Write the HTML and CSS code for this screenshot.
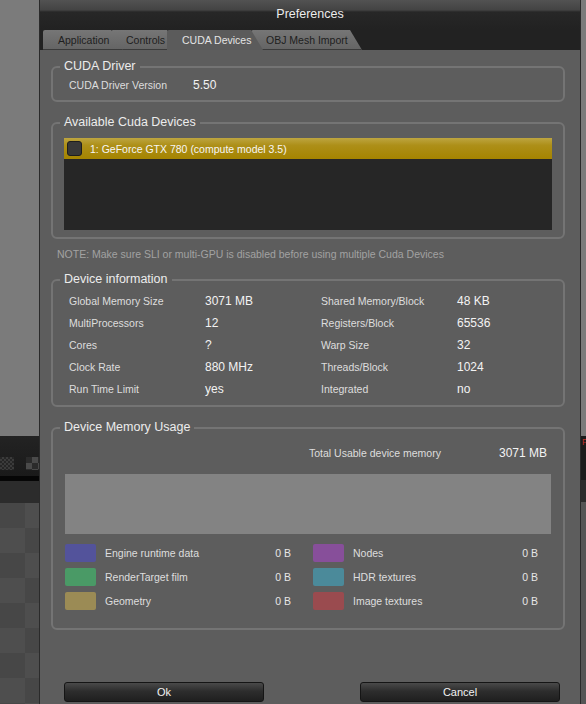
FILE: index.html
```html
<!DOCTYPE html>
<html lang="en">
<head>
<meta charset="utf-8">
<title>Preferences</title>
<link rel="stylesheet" href="styles.css">
</head>
<body>
<div class="screen">
  <div class="side side-left">
    <div class="side-top"></div>
    <div class="side-toolbar"><span class="chk chk-a"></span><span class="chk chk-b"></span></div>
    <div class="side-line"></div>
    <div class="side-bar"></div>
    <div class="side-checker"></div>
  </div>

  <div class="dialog">
    <div class="titlebar">Preferences</div>
    <div class="tabbar">
      <div class="tab tab-app">Application</div>
      <div class="tab tab-ctrl">Controls</div>
      <div class="tab tab-active">CUDA Devices</div>
      <div class="tab tab-obj">OBJ Mesh Import</div>
    </div>

    <div class="content">
      <fieldset class="group g-driver">
        <legend>CUDA Driver</legend>
        <div class="drv-row"><span class="lbl">CUDA Driver Version</span><span class="val">5.50</span></div>
      </fieldset>

      <fieldset class="group g-devices">
        <legend>Available Cuda Devices</legend>
        <div class="list-wrap">
          <div class="list">
            <div class="list-item"><span class="check"></span><span>1: GeForce GTX 780 (compute model 3.5)</span></div>
          </div>
        </div>
      </fieldset>

      <div class="note">NOTE: Make sure SLI or multi-GPU is disabled before using multiple Cuda Devices</div>

      <fieldset class="group g-info">
        <legend>Device information</legend>
        <div class="info-grid">
          <span class="lbl">Global Memory Size</span><span class="val">3071 MB</span>
          <span class="lbl">Shared Memory/Block</span><span class="val">48 KB</span>
          <span class="lbl">MultiProcessors</span><span class="val">12</span>
          <span class="lbl">Registers/Block</span><span class="val">65536</span>
          <span class="lbl">Cores</span><span class="val">?</span>
          <span class="lbl">Warp Size</span><span class="val">32</span>
          <span class="lbl">Clock Rate</span><span class="val">880 MHz</span>
          <span class="lbl">Threads/Block</span><span class="val">1024</span>
          <span class="lbl">Run Time Limit</span><span class="val">yes</span>
          <span class="lbl">Integrated</span><span class="val">no</span>
        </div>
      </fieldset>

      <fieldset class="group g-mem">
        <legend>Device Memory Usage</legend>
        <div class="mem-wrap">
          <div class="total"><span class="lbl">Total Usable device memory</span><span class="val">3071 MB</span></div>
          <div class="mem-bar"></div>
          <div class="mem-legend">
            <div class="mem-item"><span class="sw sw-engine"></span><span class="lbl">Engine runtime data</span><span class="num">0 B</span></div>
            <div class="mem-item"><span class="sw sw-nodes"></span><span class="lbl">Nodes</span><span class="num">0 B</span></div>
            <div class="mem-item"><span class="sw sw-film"></span><span class="lbl">RenderTarget film</span><span class="num">0 B</span></div>
            <div class="mem-item"><span class="sw sw-hdr"></span><span class="lbl">HDR textures</span><span class="num">0 B</span></div>
            <div class="mem-item"><span class="sw sw-geo"></span><span class="lbl">Geometry</span><span class="num">0 B</span></div>
            <div class="mem-item"><span class="sw sw-img"></span><span class="lbl">Image textures</span><span class="num">0 B</span></div>
          </div>
        </div>
      </fieldset>

      <div class="footer">
        <button class="btn">Ok</button>
        <button class="btn">Cancel</button>
      </div>
    </div>
  </div>

  <div class="side side-right">
    <div class="side-top"></div>
    <div class="side-toolbar-r"><span class="red-p">P</span></div>
    <div class="side-bar"></div>
    <div class="side-plain"></div>
  </div>
</div>
</body>
</html>
```

FILE: styles.css
```css
* { box-sizing: border-box; }

body {
  margin: 0;
  background: #7b7b7b;
  font-family: "Liberation Sans", Arial, sans-serif;
}

.screen {
  display: flex;
  width: 586px;
  height: 704px;
  overflow: hidden;
}

/* ---------- background strips ---------- */
.side {
  display: flex;
  flex-direction: column;
  flex: none;
  overflow: hidden;
}
.side-left { width: 39px; }
.side-right { width: 5px; }

.side-top { height: 436px; flex: none; background: #7b7b7b; }

.side-toolbar {
  height: 40px;
  flex: none;
  background: linear-gradient(#232323, #1a1a1a);
  display: flex;
  gap: 12px;
  padding-top: 21px;
}
.chk { display: block; width: 14px; height: 13px; }
.chk-a {
  background: repeating-conic-gradient(#3b3b3b 0 25%, #262626 0 50%) 0 0 / 4px 4px;
}
.chk-b {
  width: 13px;
  background: repeating-conic-gradient(#4a4a4a 0 25%, #2b2b2b 0 50%) 0 0 / 12px 12px;
}
.side-line { height: 5px; flex: none; background: #060606; }
.side-bar { height: 22px; flex: none; background: #2c2c2c; }
.side-checker {
  flex: 1;
  background: repeating-conic-gradient(#4e4e4e 0 25%, #474747 0 50%) 0 0 / 50px 50px;
}

.side-toolbar-r {
  height: 44px;
  flex: none;
  background: #1b1b1b;
  padding-top: 1px;
}
.red-p {
  display: block;
  color: #c0302a;
  font-size: 9px;
  line-height: 10px;
  margin-left: 1px;
}
.side-plain { flex: 1; background: #555555; }

/* ---------- dialog ---------- */
.dialog {
  width: 542px;
  flex: none;
  display: flex;
  flex-direction: column;
  background: #5d5d5d;
  border-left: 1px solid #2a2a2a;
  border-right: 1px solid #2a2a2a;
}

.titlebar {
  height: 29px;
  flex: none;
  background: linear-gradient(#525252 0, #434343 10px, #272727 12px, #222222 29px);
  color: #ececec;
  font-size: 12.5px;
  line-height: 28px;
  text-align: center;
}

.tabbar {
  height: 21px;
  flex: none;
  background: #222222;
  display: flex;
  align-items: flex-end;
  padding-left: 3px;
}

.tab {
  height: 20px;
  padding-left: 15px;
  font-size: 10.5px;
  line-height: 20px;
  white-space: nowrap;
  overflow: hidden;
  color: #1e1e1e;
  background: linear-gradient(#767676, #646464);
  border-radius: 2px 0 0 0;
  clip-path: polygon(0 0, calc(100% - 12px) 0, 100% 100%, 0 100%);
  box-shadow: inset 0 -1px 0 #3a3a3a;
}
.tab-app { width: 80px; z-index: 3; }
.tab-ctrl { width: 68px; margin-left: -12px; z-index: 2; }
.tab-active {
  width: 96px;
  margin-left: -12px;
  z-index: 4;
  background: #5b5b5b;
  color: #e4e4e4;
  box-shadow: none;
}
.tab-obj { width: 111px; margin-left: -12px; z-index: 1; }

.content {
  flex: 1;
  display: flex;
  flex-direction: column;
  padding: 0 15px 0 11px;
}

/* ---------- group boxes ---------- */
.group {
  margin: 0;
  padding: 0;
  min-width: 0;
  border: 2px solid #747474;
  border-radius: 6px;
}
.group legend {
  margin-left: 7px;
  padding: 0 4px;
  font-size: 12.5px;
  line-height: 15px;
  color: #ececec;
}

.lbl { color: #dedede; font-size: 10.5px; }
.val { color: #f3f3f3; font-size: 12px; }

.g-driver { margin-top: 9px; padding: 3px 0 7px; }
.drv-row {
  display: flex;
  align-items: center;
  height: 16px;
  padding-left: 16px;
}
.drv-row .lbl { width: 124px; }

.g-devices { margin-top: 13px; padding: 8px 0 7px; }
.list-wrap { padding: 0 11px; }
.list {
  height: 92px;
  background: #262626;
}
.list-item {
  height: 21px;
  display: flex;
  align-items: center;
  gap: 8px;
  padding-left: 3px;
  background: linear-gradient(#bda540 0, #ad8f18 35%, #a58400 100%);
  color: #f6f6f6;
  font-size: 10.5px;
}
.check {
  width: 15px;
  height: 15px;
  border: 1px solid #1e1e1e;
  border-radius: 3px;
  background: #383838;
}

.note {
  margin-top: 7px;
  padding-left: 6px;
  font-size: 10.5px;
  line-height: 16px;
  color: #a2a2a2;
}

.g-info { margin-top: 10px; padding: 3px 0 5px; }
.info-grid {
  display: grid;
  grid-template-columns: 136px 116px 136px 1fr;
  grid-auto-rows: 22px;
  align-items: center;
  padding-left: 16px;
}

.g-mem { margin-top: 13px; padding: 10px 0 18px; }
.mem-wrap { padding: 0 12px; }
.total {
  display: flex;
  align-items: center;
  height: 16px;
  padding-left: 244px;
  padding-right: 4px;
}
.total .lbl { flex: 1; }
.mem-bar {
  margin-top: 13px;
  height: 60px;
  background: #838383;
}
.mem-legend {
  margin-top: 10px;
  display: grid;
  grid-template-columns: 226px 225px;
  column-gap: 22px;
  row-gap: 6px;
}
.mem-item {
  display: flex;
  align-items: center;
  height: 18px;
}
.mem-item .lbl { flex: 1; margin-left: 9px; }
.num { color: #e6e6e6; font-size: 10.5px; }
.sw {
  width: 31px;
  height: 18px;
  border-radius: 2px;
}
.sw-engine { background: #53539b; }
.sw-film { background: #4a9a66; }
.sw-geo { background: #9b8b55; }
.sw-nodes { background: #874f9a; }
.sw-hdr { background: #4b8a9a; }
.sw-img { background: #9a4b4f; }

/* ---------- buttons ---------- */
.footer {
  margin-top: auto;
  display: flex;
  justify-content: space-between;
  padding: 0 5px 2px 13px;
}
.btn {
  width: 200px;
  height: 20px;
  border: 1px solid #151515;
  border-radius: 3px;
  background: linear-gradient(#4a4a4a, #2d2d2d 45%, #1f1f1f);
  color: #f2f2f2;
  font-family: "Liberation Sans", Arial, sans-serif;
  font-size: 11px;
  padding: 0;
}
```
